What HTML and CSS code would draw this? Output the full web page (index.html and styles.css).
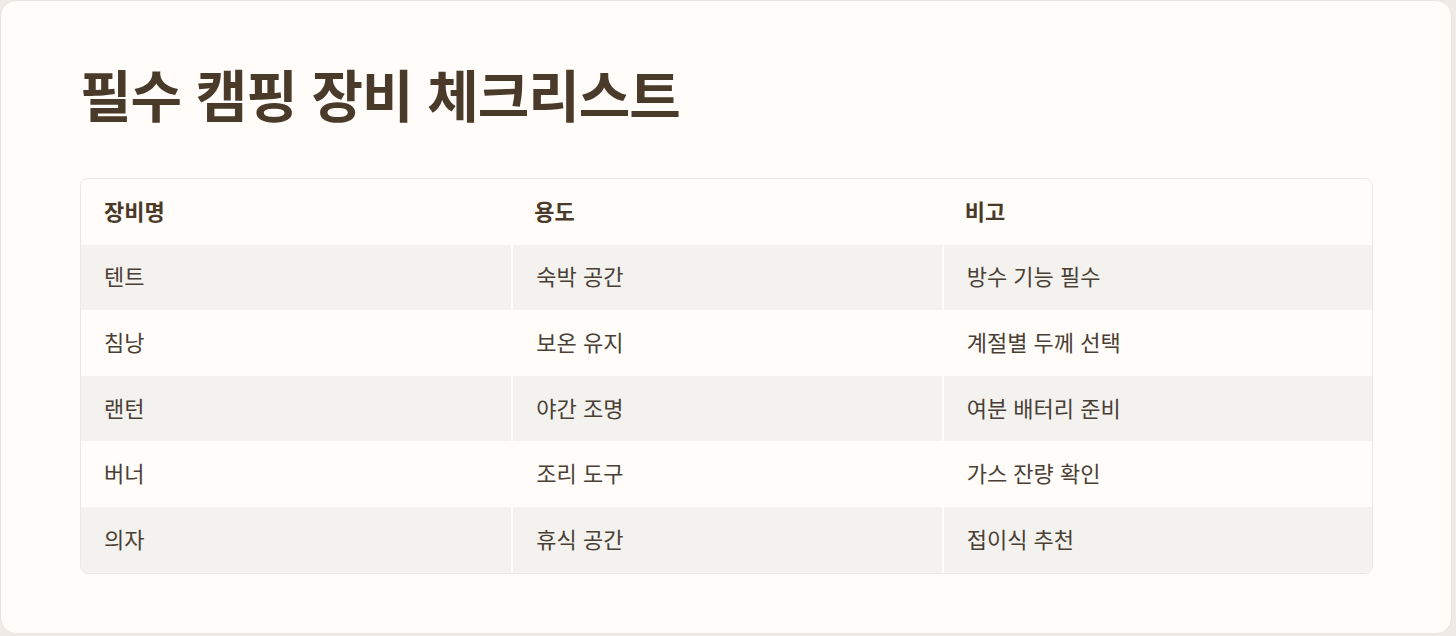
FILE: index.html
```html
<!DOCTYPE html>
<html lang="ko">
<head>
    <meta charset="UTF-8">
    <meta name="viewport" content="width=device-width, initial-scale=1.0">
    <title>필수 캠핑 장비 체크리스트</title>
    <link rel="stylesheet" href="styles.css">
</head>
<body>
    <div class="card">
        <h1 class="title">필수 캠핑 장비 체크리스트</h1>

        <table class="gear-table">
            <thead>
                <tr>
                    <th>장비명</th>
                    <th>용도</th>
                    <th>비고</th>
                </tr>
            </thead>
            <tbody>
                <tr>
                    <td>텐트</td>
                    <td>숙박 공간</td>
                    <td>방수 기능 필수</td>
                </tr>
                <tr>
                    <td>침낭</td>
                    <td>보온 유지</td>
                    <td>계절별 두께 선택</td>
                </tr>
                <tr>
                    <td>랜턴</td>
                    <td>야간 조명</td>
                    <td>여분 배터리 준비</td>
                </tr>
                <tr>
                    <td>버너</td>
                    <td>조리 도구</td>
                    <td>가스 잔량 확인</td>
                </tr>
                <tr>
                    <td>의자</td>
                    <td>휴식 공간</td>
                    <td>접이식 추천</td>
                </tr>
            </tbody>
        </table>
    </div>
</body>
</html>
```

FILE: styles.css
```css
/* General Styles */
body {
    font-family: "Noto Sans CJK KR", "Noto Sans", sans-serif;
    background-color: #efeae6;
    margin: 0;
    color: #4a3f35;
}

/* Card */
.card {
    box-sizing: border-box;
    width: 1452px;
    height: 634px;
    background: #fffcf9;
    border: 1px solid #e9e4df;
    border-radius: 16px;
    padding: 52px 79px;
}

.title {
    margin: 0 0 45px;
    font-size: 56px;
    font-weight: 700;
    line-height: 80px;
    color: #4a3a2a;
    letter-spacing: -1px;
}

/* Table */
.gear-table {
    width: 1293px;
    border-collapse: separate;
    border-spacing: 0;
    border: 1px solid #ebe7e3;
    border-radius: 8px;
    overflow: hidden;
    table-layout: fixed;
}

.gear-table th,
.gear-table td {
    text-align: left;
    padding: 0 23px 4px;
    height: 65.6px;
    box-sizing: border-box;
}

.gear-table th {
    font-size: 22px;
    font-weight: 700;
    color: #4a3a2a;
}

.gear-table td {
    font-size: 22px;
    color: #4a3f35;
    border-left: 2px solid #fffcf9;
}

.gear-table td:first-child {
    border-left: none;
    padding-left: 23px;
}

.gear-table tbody tr:nth-child(odd) td {
    background: #f4f2ef;
}
```
